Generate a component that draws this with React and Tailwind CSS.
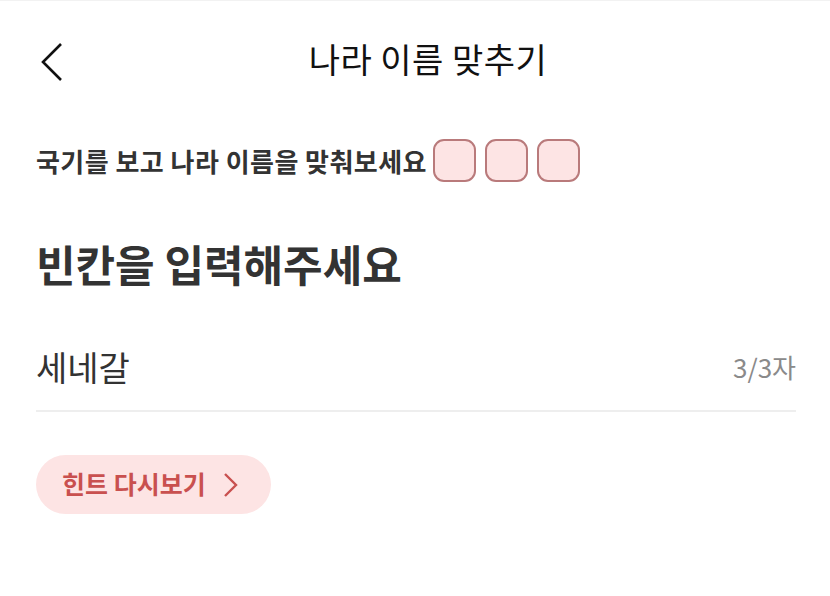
import { useState } from "react";

const font = { fontFamily: '"Noto Sans CJK KR", "Noto Sans", sans-serif' };

const BackIcon = () => (
  <svg width="24" height="40" viewBox="0 0 24 40" fill="none">
    <polyline points="20,2 2,20 20,38" stroke="#111" strokeWidth="2.6" strokeLinejoin="miter" />
  </svg>
);

const HintChevron = () => (
  <svg width="16" height="26" viewBox="0 0 16 26" fill="none">
    <polyline points="3,2 14,13 3,24" stroke="#c9504f" strokeWidth="2.4" />
  </svg>
);

const App = () => {
  const [answer] = useState("세네갈");
  const slots = [0, 1, 2];

  return (
    <div className="w-[830px] h-[596px] bg-white border-t border-[#f2f2f2] text-[#333]" style={font}>
      {/* header */}
      <div className="flex items-center h-[123px]">
        <button className="w-[96px] h-full flex items-center pl-[41px] pb-[1px]">
          <BackIcon />
        </button>
        <h1 className="flex-1 text-center text-[34px] tracking-[0.5px] leading-none text-[#111] pb-[8px]">나라 이름 맞추기</h1>
        <div className="w-[70px]" />
      </div>

      <div className="pl-[36px] pr-[34px]">
        {/* question */}
        <div className="flex items-center h-[76px]">
          <p className="text-[26px] font-bold tracking-[0.45px] leading-none pb-[3px]">국기를 보고 나라 이름을 맞춰보세요</p>
          <div className="flex gap-[9px] ml-[6px] pb-[4px]">
            {slots.map((i) => (
              <div
                key={i}
                className="w-[43px] h-[43px] rounded-[11px] border-2 border-[#b97a7b] bg-[#fde4e4]"
              />
            ))}
          </div>
        </div>

        <h2 className="mt-[42px] text-[43px] font-bold leading-none">빈칸을 입력해주세요</h2>

        {/* input */}
        <div className="mt-[45px] flex items-center justify-between h-[82px] border-b-2 border-[#eeeeee]">
          <span className="text-[34px] leading-none pb-[6px]">{answer}</span>
          <span className="text-[26px] leading-none text-[#8a8a8a] pb-[6px]">3/3자</span>
        </div>

        {/* hint */}
        <button className="mt-[43px] h-[59px] w-[235px] rounded-full bg-[#fde4e4] flex items-center pl-[26px] gap-[16px]">
          <span className="text-[25px] font-bold leading-none text-[#c9504f] pb-[2px]">힌트 다시보기</span>
          <HintChevron />
        </button>
      </div>
    </div>
  );
};

export default App;
